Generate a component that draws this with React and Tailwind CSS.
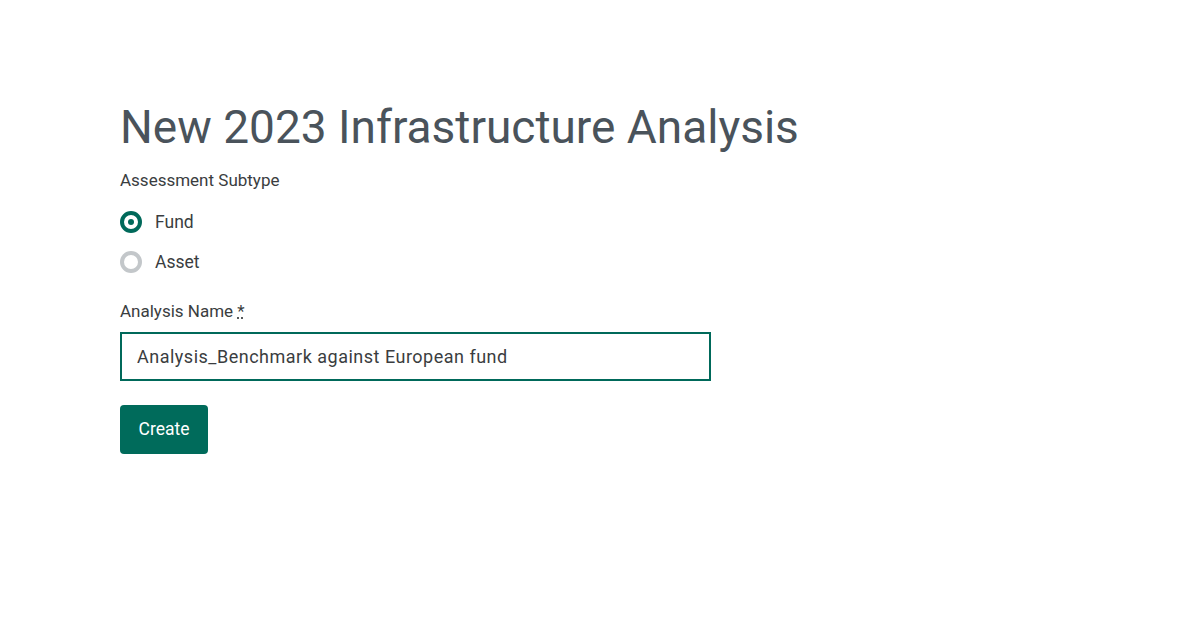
import React, { useState } from "react";

const font = { fontFamily: 'Roboto, "Liberation Sans", sans-serif' };

const Radio = ({ checked, label, onClick }) => (
  <button type="button" onClick={onClick} className="flex items-center gap-[13px] h-[22px]">
    {checked ? (
      <span className="w-[22px] h-[22px] rounded-full border-[4px] border-[#00695a] flex items-center justify-center">
        <span className="w-[6px] h-[6px] rounded-full bg-[#00695a]" />
      </span>
    ) : (
      <span className="w-[22px] h-[22px] rounded-full border-[4px] border-[#c3c7ca]" />
    )}
    <span className="text-[17.5px] text-[#3a3d40]">{label}</span>
  </button>
);

export default function App() {
  const [subtype, setSubtype] = useState("fund");
  const [name, setName] = useState("Analysis_Benchmark against European fund");

  return (
    <div className="min-h-[627px] bg-white pl-[120px] pt-[97px]" style={font}>
      <h1 className="text-[46px] leading-[60px] text-[#4a535b]">
        New 2023 Infrastructure Analysis
      </h1>
      <div className="mt-[11px] text-[17px] leading-[24px] text-[#3a3d40]">Assessment Subtype</div>
      <div className="mt-[19px] flex flex-col gap-[18px]">
        <Radio checked={subtype === "fund"} label="Fund" onClick={() => setSubtype("fund")} />
        <Radio checked={subtype === "asset"} label="Asset" onClick={() => setSubtype("asset")} />
      </div>
      <div className="mt-[26px] text-[17px] leading-[24px] text-[#3a3d40]">
        Analysis Name{" "}
        <abbr title="required" className="underline decoration-dotted">*</abbr>
      </div>
      <input
        value={name}
        onChange={(e) => setName(e.target.value)}
        className="mt-[9px] block w-[591px] h-[49px] border-2 border-[#00695a] px-[15px] text-[18px] tracking-[0.5px] text-[#3a3d40] outline-none"
        style={font}
      />
      <button
        type="button"
        className="mt-[24px] w-[88px] h-[49px] rounded-[4px] bg-[#006b5b] text-white text-[17.5px]"
      >
        Create
      </button>
    </div>
  );
}
